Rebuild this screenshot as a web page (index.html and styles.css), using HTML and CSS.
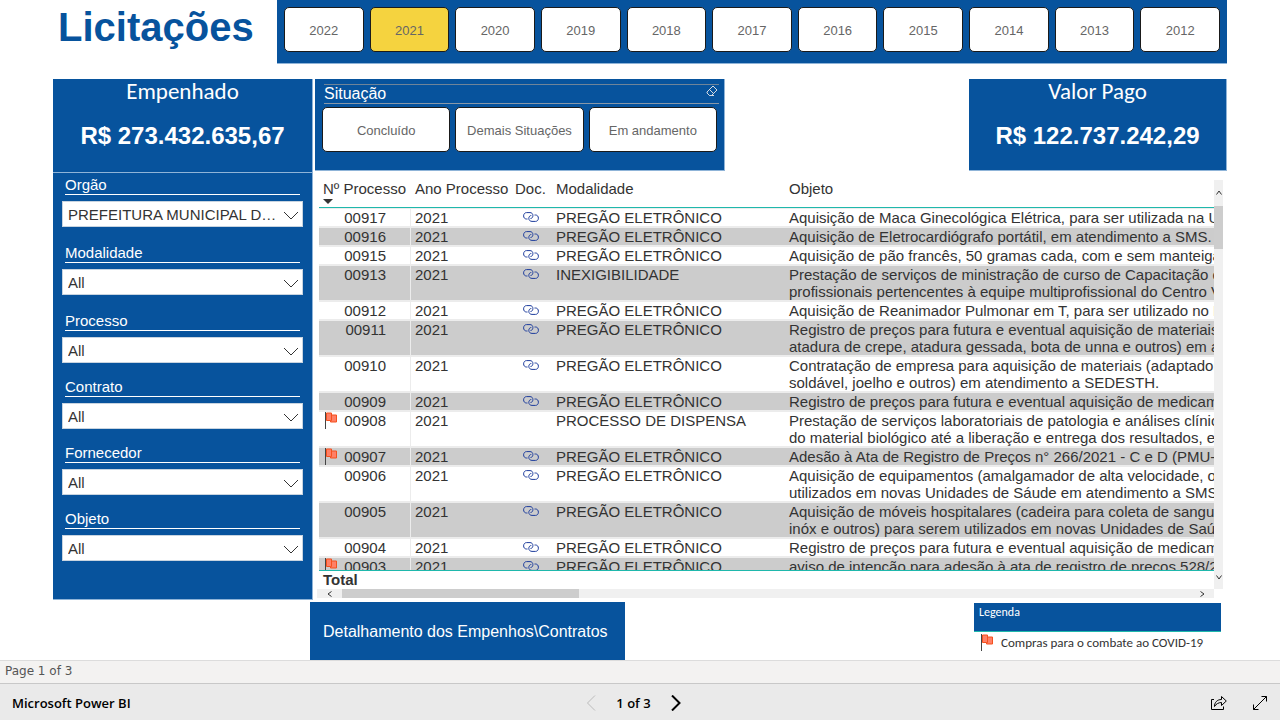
FILE: index.html
```html
<!DOCTYPE html>
<html lang="pt-BR">
<head>
<meta charset="utf-8">
<meta name="viewport" content="width=device-width, initial-scale=1">
<title>Licitações</title>
<link rel="stylesheet" href="styles.css">
</head>
<body>
<svg class="sprite" aria-hidden="true">
  <symbol id="link" viewBox="0 0 16 10">
    <path d="M4.500 7H3.500C1.800 7 .6 5.700 .6 3.900S1.800 .6 3.500 .6H7C8.800 .6 9.900 1.800 9.900 3.600S8.800 6.500 7.500 6.500M11.500 3H12.500C14.200 3 15.400 4.300 15.400 6.200S14.200 9.400 12.500 9.400H9C7.200 9.400 5.800 8.200 5.800 6.400S7 3.500 8.300 3.500"/>
  </symbol>
  <symbol id="flag" viewBox="0 0 12 17">
    <path class="cloth" d="M1.500 1H6.500V3H11.500V10H5.500V8.500H1.500Z"/>
    <path class="fold" d="M6.500 3V8.500H5.500"/>
    <path class="pole" d="M.5 0V17"/>
  </symbol>
</svg>

<main class="report">
  <header class="top">
    <h1>Licitações</h1>
    <nav class="years" aria-label="Ano">
      <button type="button">2022</button>
      <button type="button" class="active" aria-pressed="true">2021</button>
      <button type="button">2020</button>
      <button type="button">2019</button>
      <button type="button">2018</button>
      <button type="button">2017</button>
      <button type="button">2016</button>
      <button type="button">2015</button>
      <button type="button">2014</button>
      <button type="button">2013</button>
      <button type="button">2012</button>
    </nav>
  </header>

  <div class="middle">
    <aside class="side">
      <section class="card">
        <h2>Empenhado</h2>
        <p>R$ 273.432.635,67</p>
      </section>
      <form class="filters">
        <div class="filter"><label for="orgao">Orgão</label><div class="pick"><select id="orgao"><option>PREFEITURA MUNICIPAL D…</option></select><svg viewBox="0 0 16 9"><path d="M1 1L8 8L15 1"/></svg></div></div>
        <div class="filter"><label for="modalidade">Modalidade</label><div class="pick"><select id="modalidade"><option>All</option></select><svg viewBox="0 0 16 9"><path d="M1 1L8 8L15 1"/></svg></div></div>
        <div class="filter"><label for="processo">Processo</label><div class="pick"><select id="processo"><option>All</option></select><svg viewBox="0 0 16 9"><path d="M1 1L8 8L15 1"/></svg></div></div>
        <div class="filter"><label for="contrato">Contrato</label><div class="pick"><select id="contrato"><option>All</option></select><svg viewBox="0 0 16 9"><path d="M1 1L8 8L15 1"/></svg></div></div>
        <div class="filter"><label for="fornecedor">Fornecedor</label><div class="pick"><select id="fornecedor"><option>All</option></select><svg viewBox="0 0 16 9"><path d="M1 1L8 8L15 1"/></svg></div></div>
        <div class="filter"><label for="objeto">Objeto</label><div class="pick"><select id="objeto"><option>All</option></select><svg viewBox="0 0 16 9"><path d="M1 1L8 8L15 1"/></svg></div></div>
      </form>
    </aside>

    <div class="content">
      <div class="summary">
        <section class="status">
          <div class="status-head">
            <h2>Situação</h2>
            <button type="button" class="clear" aria-label="Limpar seleções"><svg viewBox="0 0 12 12"><path d="M7 1L11 5L5.500 10.500H3.500L1 8V7ZM3.500 4.500L7.500 8.500M3.500 10.500H8"/></svg></button>
          </div>
          <div class="status-options">
            <button type="button">Concluído</button>
            <button type="button">Demais Situações</button>
            <button type="button">Em andamento</button>
          </div>
        </section>
        <section class="card paid">
          <h2>Valor Pago</h2>
          <p>R$ 122.737.242,29</p>
        </section>
      </div>

      <div class="grid">
        <div class="viewport">
          <table>
            <colgroup><col class="c-num"><col class="c-year"><col class="c-doc"><col class="c-mod"><col></colgroup>
            <thead>
              <tr><th>Nº Processo<span class="sort"></span></th><th>Ano Processo</th><th>Doc.</th><th>Modalidade</th><th>Objeto</th></tr>
            </thead>
            <tbody>
              <tr><td class="num">00917</td><td>2021</td><td class="doc"><a href="#" aria-label="Documento"><svg><use href="#link"/></svg></a></td><td>PREGÃO ELETRÔNICO</td><td>Aquisição de Maca Ginecológica Elétrica, para ser utilizada na UBS</td></tr>
              <tr><td class="num">00916</td><td>2021</td><td class="doc"><a href="#" aria-label="Documento"><svg><use href="#link"/></svg></a></td><td>PREGÃO ELETRÔNICO</td><td>Aquisição de Eletrocardiógrafo portátil, em atendimento a SMS.</td></tr>
              <tr><td class="num">00915</td><td>2021</td><td class="doc"><a href="#" aria-label="Documento"><svg><use href="#link"/></svg></a></td><td>PREGÃO ELETRÔNICO</td><td>Aquisição de pão francês, 50 gramas cada, com e sem manteiga</td></tr>
              <tr><td class="num">00913</td><td>2021</td><td class="doc"><a href="#" aria-label="Documento"><svg><use href="#link"/></svg></a></td><td>INEXIGIBILIDADE</td><td>Prestação de serviços de ministração de curso de Capacitação em<br>profissionais pertencentes à equipe multiprofissional do Centro Vi</td></tr>
              <tr><td class="num">00912</td><td>2021</td><td class="doc"><a href="#" aria-label="Documento"><svg><use href="#link"/></svg></a></td><td>PREGÃO ELETRÔNICO</td><td>Aquisição de Reanimador Pulmonar em T, para ser utilizado no H</td></tr>
              <tr><td class="num">00911</td><td>2021</td><td class="doc"><a href="#" aria-label="Documento"><svg><use href="#link"/></svg></a></td><td>PREGÃO ELETRÔNICO</td><td>Registro de preços para futura e eventual aquisição de materiais m<br>atadura de crepe, atadura gessada, bota de unna e outros) em ate</td></tr>
              <tr><td class="num">00910</td><td>2021</td><td class="doc"><a href="#" aria-label="Documento"><svg><use href="#link"/></svg></a></td><td>PREGÃO ELETRÔNICO</td><td>Contratação de empresa para aquisição de materiais (adaptador s<br>soldável, joelho e outros) em atendimento a SEDESTH.</td></tr>
              <tr><td class="num">00909</td><td>2021</td><td class="doc"><a href="#" aria-label="Documento"><svg><use href="#link"/></svg></a></td><td>PREGÃO ELETRÔNICO</td><td>Registro de preços para futura e eventual aquisição de medicamentos</td></tr>
              <tr><td class="num"><svg class="flag"><use href="#flag"/></svg>00908</td><td>2021</td><td class="doc"></td><td>PROCESSO DE DISPENSA</td><td>Prestação de serviços laboratoriais de patologia e análises clínicas<br>do material biológico até a liberação e entrega dos resultados, em</td></tr>
              <tr><td class="num"><svg class="flag"><use href="#flag"/></svg>00907</td><td>2021</td><td class="doc"><a href="#" aria-label="Documento"><svg><use href="#link"/></svg></a></td><td>PREGÃO ELETRÔNICO</td><td>Adesão à Ata de Registro de Preços n° 266/2021 - C e D (PMU-S</td></tr>
              <tr><td class="num">00906</td><td>2021</td><td class="doc"><a href="#" aria-label="Documento"><svg><use href="#link"/></svg></a></td><td>PREGÃO ELETRÔNICO</td><td>Aquisição de equipamentos (amalgamador de alta velocidade, oxi<br>utilizados em novas Unidades de Sáude em atendimento a SMS.</td></tr>
              <tr><td class="num">00905</td><td>2021</td><td class="doc"><a href="#" aria-label="Documento"><svg><use href="#link"/></svg></a></td><td>PREGÃO ELETRÔNICO</td><td>Aquisição de móveis hospitalares (cadeira para coleta de sangue,<br>inóx e outros) para serem utilizados em novas Unidades de Saúde</td></tr>
              <tr><td class="num">00904</td><td>2021</td><td class="doc"><a href="#" aria-label="Documento"><svg><use href="#link"/></svg></a></td><td>PREGÃO ELETRÔNICO</td><td>Registro de preços para futura e eventual aquisição de medicamentos</td></tr>
              <tr><td class="num"><svg class="flag"><use href="#flag"/></svg>00903</td><td>2021</td><td class="doc"><a href="#" aria-label="Documento"><svg><use href="#link"/></svg></a></td><td>PREGÃO ELETRÔNICO</td><td>aviso de intenção para adesão à ata de registro de preços 528/20<br>&nbsp;</td></tr>
            </tbody>
            <tfoot><tr><td colspan="5">Total</td></tr></tfoot>
          </table>
        </div>
        <div class="vbar">
          <svg viewBox="0 0 6 5"><path d="M.5 4.500L3 1L5.500 4.500"/></svg>
          <div class="vtrack"><div class="vthumb"></div></div>
          <svg viewBox="0 0 6 5"><path d="M.5 .5L3 4L5.500 .5"/></svg>
        </div>
        <div class="hbar">
          <svg viewBox="0 0 5 6"><path d="M4.500 .5L1 3L4.500 5.500"/></svg>
          <div class="htrack"><div class="hthumb"></div></div>
          <svg viewBox="0 0 5 6"><path d="M.5 .5L4 3L.5 5.500"/></svg>
        </div>
      </div>
    </div>
  </div>

  <div class="bottom">
    <button type="button" class="detail">Detalhamento dos Empenhos\Contratos</button>
    <section class="legend">
      <h2>Legenda</h2>
      <p><svg class="flag"><use href="#flag"/></svg>Compras para o combate ao COVID-19</p>
    </section>
  </div>
</main>

<div class="page-strip">Page 1 of 3</div>
<footer class="bar">
  <a href="#" class="brand">Microsoft Power BI</a>
  <div class="pager">
    <button type="button" disabled aria-label="Página anterior"><svg viewBox="0 0 10 16"><path d="M9 .5L1.500 8L9 15.500"/></svg></button>
    <span>1 of 3</span>
    <button type="button" class="next" aria-label="Próxima página"><svg viewBox="0 0 10 16"><path d="M1 .5L8.500 8L1 15.500"/></svg></button>
  </div>
  <div class="tools">
    <button type="button" aria-label="Compartilhar"><svg viewBox="0 0 16 16"><path d="M3 4.500H.5V14.500H12.500V11.500M3.500 11.500C3.500 7.500 6 4.500 10.500 4.500V1.500L15.300 6L10.500 10.500V7.500C7.500 7.500 5 9 3.500 11.500Z"/></svg></button>
    <button type="button" aria-label="Tela cheia"><svg viewBox="0 0 16 16"><path d="M1.500 14.500L14.500 1.500M9.500 1.500H14.500V6.500M1.500 9.500V14.500H6.500"/></svg></button>
  </div>
</footer>
</body>
</html>
```

FILE: styles.css
```css
:root {
  --blue: #07539d;
  --edge: #8fb4d8;
  --ink: #333;
  --teal: #1fb8ac;
  --human: Carlito, Lato, sans-serif;
}

* { box-sizing: border-box; }

body {
  margin: 0;
  height: 100vh;
  display: flex;
  flex-direction: column;
  background: #fff;
  color: var(--ink);
  font: 15px/17px "Liberation Sans", Arial, sans-serif;
}

h1, h2, p { margin: 0; font-weight: normal; }
button { font-family: inherit; cursor: pointer; }
svg { fill: none; stroke: currentColor; }
.sprite { position: absolute; width: 0; height: 0; }

.report {
  flex: 1;
  min-height: 0;
  display: flex;
  flex-direction: column;
  padding: 0 53px;
}

/* Title and year buttons */
.top { display: flex; }
.top h1 {
  width: 224px;
  padding: 4px 5px;
  color: var(--blue);
  font-size: 40px;
  line-height: 46px;
  font-weight: bold;
}
.years {
  flex: 1;
  display: grid;
  grid-template-columns: repeat(11, 1fr);
  gap: 6px;
  padding: 7px 7px 11px;
  background: var(--blue);
  border-bottom: 1px solid var(--edge);
}
.years button, .status-options button {
  height: 45px;
  padding: 1px 0 0;
  background: #fff;
  border: 1px solid #1a1a1a;
  border-radius: 5px;
  color: #666;
  font-size: 13px;
}
.years .active { background: #f5d33f; }

/* Body */
.middle {
  flex: 1;
  min-height: 0;
  display: flex;
  gap: 2px;
  margin-top: 15px;
}
.side {
  width: 260px;
  background: var(--blue);
  border: solid var(--edge);
  border-width: 0 1px 1px 0;
}
.card {
  height: 94px;
  background: var(--blue);
  border-bottom: 1px solid var(--edge);
  color: #fff;
  text-align: center;
}
.card h2 {
  font-family: var(--human);
  font-size: 23px;
  line-height: 25px;
}
.card p {
  padding-top: 18px;
  font-size: 24px;
  line-height: 28px;
  font-weight: bold;
}

.filters { padding: 3px 9px; }
.filter { margin-bottom: 15px; }
.filter:nth-child(-n+2) { margin-bottom: 17px; }
.filter label {
  display: block;
  margin: 0 3px 6px;
  padding-bottom: 1px;
  border-bottom: 1px solid #fff;
  color: #fff;
}
.pick { display: grid; align-items: center; }
.pick > * { grid-area: 1 / 1; }
.pick select {
  appearance: none;
  width: 100%;
  height: 26px;
  padding: 0 24px 0 5px;
  background: #fff;
  border: 1px solid #c8d4e0;
  border-radius: 0;
  color: var(--ink);
  font: inherit;
}
.pick svg {
  justify-self: end;
  width: 16px;
  height: 9px;
  margin: 2px 4px 0 0;
  pointer-events: none;
}

.content {
  flex: 1;
  min-width: 0;
  display: flex;
  flex-direction: column;
}
.summary { display: flex; justify-content: space-between; }
.status {
  width: 410px;
  padding: 5px 5px 0 7px;
  background: var(--blue);
  border: solid var(--edge);
  border-width: 0 1px 1px 0;
}
.status-head {
  display: flex;
  justify-content: space-between;
  margin: 0 0 3px 2px;
  border-top: 1px solid #6f8499;
  border-bottom: 1px solid #8998a8;
  color: #fff;
}
.status-head h2 { font-size: 16px; line-height: 18px; }
.clear {
  padding: 0;
  width: 13px;
  height: 12px;
  background: none;
  border: 0;
  color: #d5dbe2;
}
.clear svg { display: block; width: 12px; height: 12px; }
.status-options {
  display: grid;
  grid-template-columns: repeat(3, 1fr);
  gap: 5px;
  padding-right: 2px;
}
.paid {
  width: 258px;
  height: 92px;
  border-right: 1px solid var(--edge);
}

/* Table */
.grid {
  flex: 1;
  min-height: 0;
  display: grid;
  grid-template: minmax(0, 1fr) 9px / minmax(0, 1fr) 9px;
  margin: 9px 4px 2px 2px;
}
.viewport { overflow: hidden; padding-left: 2px; }
table {
  width: 100%;
  table-layout: fixed;
  border-spacing: 0;
}
.c-num { width: 92px; }
.c-year { width: 100px; }
.c-doc { width: 41px; }
.c-mod { width: 233px; }
th {
  height: 28px;
  padding: 0 0 0 4px;
  border-bottom: 1px solid var(--teal);
  background: #fff;
  font-weight: normal;
  text-align: left;
  vertical-align: top;
  white-space: nowrap;
}
.sort {
  display: block;
  width: 0;
  margin-top: 2px;
  border: 5px solid transparent;
  border-top-color: var(--ink);
  border-bottom: 0;
}
td {
  padding: 0 0 0 4px;
  border: solid #ececec;
  border-width: 1px 0;
  vertical-align: top;
  white-space: nowrap;
  overflow: hidden;
}
td:first-child { border-right: 1px solid #ececec; }
tbody tr:nth-child(even) { background: #ccc; }
td.num { padding-right: 24px; text-align: right; }
.flag { flex: none; width: 12px; height: 17px; }
.num .flag { float: left; margin-left: 2px; }
.cloth { fill: #ff7f66; stroke: #f4511e; }
.fold { stroke: #f4511e; }
.pole { stroke: #444; }
.doc a { display: block; padding: 3px 0 0 8px; color: #1d3c9c; }
.doc svg { display: block; width: 16px; height: 10px; }
tfoot td {
  position: sticky;
  bottom: 0;
  height: 19px;
  background: #fff;
  border: 0;
  border-top: 1px solid var(--teal);
  font-weight: bold;
}
tfoot td:first-child { border-right: 0; }

.vbar, .hbar { display: flex; align-items: center; background: #f0f0f0; }
.vbar { flex-direction: column; padding: 10px 0 9px; }
.vbar svg { width: 6px; height: 5px; }
.vtrack { flex: 1; width: 100%; padding: 11px 0 8px; }
.vthumb { height: 12%; background: #cdcdcd; }
.hbar { padding: 0 9px 0 10px; }
.hbar svg { width: 5px; height: 6px; }
.htrack { flex: 1; height: 100%; padding: 0 10px; }
.hthumb { width: 28%; height: 100%; background: #cdcdcd; }

/* Bottom row */
.bottom {
  display: flex;
  justify-content: space-between;
  align-items: flex-start;
  margin-top: 2px;
  padding: 0 6px 0 257px;
}
.detail {
  width: 315px;
  height: 58px;
  padding: 1px 13px 0;
  background: var(--blue);
  border: 0;
  color: #fff;
  font-size: 16px;
  text-align: left;
}
.legend { width: 247px; padding-top: 1px; font-family: var(--human); }
.legend h2 {
  height: 29px;
  padding: 1px 5px;
  background: var(--blue);
  border-bottom: 1px solid var(--teal);
  color: #fff;
  font-size: 12px;
  line-height: 17px;
}
.legend p {
  display: flex;
  align-items: center;
  gap: 8px;
  padding: 2px 7px 0;
  font-size: 13px;
  white-space: nowrap;
}

/* Viewer chrome */
.page-strip {
  padding: 2px 5px 3px;
  background: #f3f2f1;
  border-top: 1px solid #dcdcdc;
  color: #555;
  font: 12px/17px "DejaVu Sans", sans-serif;
}
.bar {
  display: grid;
  grid-template-columns: 1fr auto 1fr;
  align-items: center;
  height: 37px;
  padding: 2px 12px 0;
  background: #eaeaea;
  border-top: 1px solid #c8c8c8;
  color: #000;
  font: 600 13px/18px "Open Sans", sans-serif;
}
.bar button {
  display: block;
  padding: 0;
  background: none;
  border: 0;
  color: #000;
}
.bar svg { display: block; }
.brand { color: inherit; text-decoration: none; }
.pager { display: flex; align-items: center; gap: 20px; margin-right: 13px; }
.pager svg { width: 10px; height: 16px; }
.pager button:disabled { color: #bbb; }
.pager .next { stroke-width: 2px; }
.tools { display: flex; justify-content: flex-end; gap: 25px; }
.tools svg { width: 16px; height: 16px; }
```
